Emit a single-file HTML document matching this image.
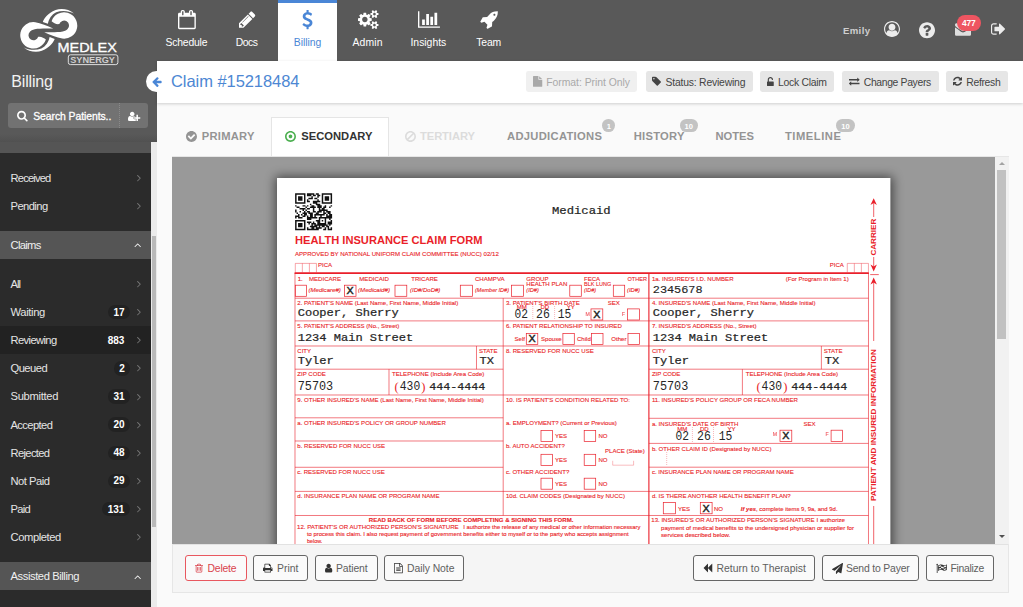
<!DOCTYPE html>
<html lang="en"><head><meta charset="utf-8"><title>Claim #15218484 - Billing</title>
<style>
html,body{margin:0;padding:0}
body{width:1023px;height:607px;overflow:hidden;background:#fafafa;position:relative;font-family:"Liberation Sans",sans-serif}
#app{position:absolute;left:0;top:0;width:1023px;height:607px;overflow:hidden}
#app div,#app span.t,#app svg.i,#app svg.a{position:absolute}
span.t{white-space:nowrap;display:block}
svg{display:block;overflow:visible}
</style></head>
<body><div id="app">
<div style="left:0px;top:0px;width:1023px;height:60.7px;background:#595959"></div>
<div style="left:0px;top:60px;width:157px;height:82px;background:#595959"></div>
<div style="left:0px;top:142px;width:151px;height:465px;background:#2b2b2b"></div>
<div style="left:0px;top:142px;width:151px;height:11px;background:#555"></div>
<div style="left:0px;top:134px;width:157px;height:8px;background:linear-gradient(to bottom,rgba(0,0,0,0),rgba(0,0,0,.09))"></div>
<div style="left:151px;top:142px;width:6px;height:465px;background:#ebebeb"></div>
<div style="left:151.5px;top:236px;width:4.5px;height:291px;background:#b9b9b9"></div>
<div style="left:277.5px;top:0px;width:59.9px;height:61px;background:#fff"></div>
<div style="left:277.5px;top:0px;width:59.9px;height:2.6px;background:#4a86d6"></div>
<svg class="i" style="left:177.79px;top:9.50px;" width="17.83" height="19.20" viewBox="0 0 1664 1792"><path fill="#fff" d="M128 1664V640H1536V1664ZM512 448C512 466 498 480 480 480H416C398 480 384 466 384 448V160C384 142 398 128 416 128H480C498 128 512 142 512 160V448ZM1280 448C1280 466 1266 480 1248 480H1184C1166 480 1152 466 1152 448V160C1152 142 1166 128 1184 128H1248C1266 128 1280 142 1280 160V448ZM1664 384C1664 314 1606 256 1536 256H1408V160C1408 72 1336 0 1248 0H1184C1096 0 1024 72 1024 160V256H640V160C640 72 568 0 480 0H416C328 0 256 72 256 160V256H128C58 256 0 314 0 384V1664C0 1734 58 1792 128 1792H1536C1606 1792 1664 1734 1664 1664Z"/></svg>
<span class="t" style="left:165.50px;top:38.00px;font-size:10.4px;line-height:10.4px;color:#fff;font-weight:400;letter-spacing:-0.196px;">Schedule</span>
<svg class="i" style="left:238.92px;top:9.50px;" width="16.46" height="19.20" viewBox="0 0 1536 1792"><path fill="#fff" d="M363 1536H256V1408H128V1301L219 1210L454 1445ZM886 608C886 614 884 620 879 625L337 1167C332 1172 326 1174 320 1174C307 1174 298 1165 298 1152C298 1146 300 1140 305 1135L847 593C852 588 858 586 864 586C877 586 886 595 886 608ZM832 416 0 1248V1664H416L1248 832ZM1515 512C1515 478 1501 445 1478 421L1243 187C1219 163 1186 149 1152 149C1118 149 1085 163 1062 187L896 352L1312 768L1478 602C1501 579 1515 546 1515 512Z"/></svg>
<span class="t" style="left:235.75px;top:38.00px;font-size:10.4px;line-height:10.4px;color:#fff;font-weight:400;letter-spacing:-0.482px;">Docs</span>
<svg class="i" style="left:302.11px;top:9.50px;" width="10.97" height="19.20" viewBox="0 0 1024 1792"><path fill="#4a86d6" d="M978 1185C978 944 770 863 586 792C444 737 322 690 322 584C322 493 410 430 537 430C687 430 808 537 809 538C817 544 826 547 836 545C846 544 854 538 859 529L940 383C947 371 945 356 935 345C931 341 823 231 620 208V32C620 14 606 0 588 0H453C436 0 421 14 421 32V212C212 252 68 404 68 588C68 839 292 929 472 1000C607 1054 725 1101 725 1197C725 1310 619 1362 521 1362C344 1362 204 1228 202 1227C196 1220 187 1217 178 1218C169 1219 160 1223 155 1230L52 1365C43 1377 44 1394 54 1406C59 1412 187 1552 421 1585V1760C421 1778 436 1792 453 1792H588C606 1792 620 1778 620 1760V1585C832 1550 978 1389 978 1185Z"/></svg>
<span class="t" style="left:293.75px;top:38.00px;font-size:10.4px;line-height:10.4px;color:#4a86d6;font-weight:400;letter-spacing:-0.041px;">Billing</span>
<svg class="i" style="left:357.76px;top:9.50px;" width="20.57" height="19.20" viewBox="0 0 1920 1792"><path fill="#fff" d="M896 896C896 1037 781 1152 640 1152C499 1152 384 1037 384 896C384 755 499 640 640 640C781 640 896 755 896 896ZM1664 1408C1664 1478 1607 1536 1536 1536C1466 1536 1408 1479 1408 1408C1408 1338 1466 1280 1536 1280C1606 1280 1664 1338 1664 1408ZM1664 384C1664 454 1607 512 1536 512C1466 512 1408 455 1408 384C1408 314 1466 256 1536 256C1606 256 1664 314 1664 384ZM1280 805C1280 791 1270 778 1256 775L1104 752C1095 724 1083 697 1070 670C1098 631 1128 595 1157 556C1161 550 1164 544 1164 537C1164 509 1046 401 1020 377C1014 372 1007 369 999 369C992 369 985 371 979 376L861 465C837 453 812 442 786 434L763 281C761 267 747 256 733 256H547C533 256 521 266 517 280C504 329 499 384 494 434C467 443 442 453 417 466L302 376C296 372 289 369 281 369C252 369 140 490 120 517C115 523 113 530 113 537C113 544 116 551 120 557C152 595 182 632 210 672C197 697 186 722 178 748L23 772C10 774 0 789 0 802V987C0 1001 10 1014 24 1016L176 1040C185 1068 197 1095 211 1122C182 1161 152 1198 123 1236C119 1242 116 1248 116 1255C116 1284 234 1391 260 1415C266 1420 273 1423 281 1423C288 1423 296 1421 301 1416L419 1327C443 1339 468 1350 494 1358L517 1511C519 1525 533 1536 547 1536H733C747 1536 759 1526 763 1512C776 1463 781 1408 786 1357C813 1349 838 1339 863 1326L978 1416C984 1420 991 1423 999 1423C1028 1423 1140 1301 1160 1274C1165 1269 1167 1262 1167 1255C1167 1247 1164 1241 1160 1235C1128 1197 1098 1160 1070 1120C1083 1095 1094 1070 1102 1044L1257 1020C1270 1018 1280 1003 1280 990ZM1920 1338C1920 1323 1791 1309 1771 1307C1763 1289 1753 1271 1741 1255C1750 1235 1792 1135 1792 1117C1792 1115 1791 1112 1788 1110C1776 1103 1669 1040 1664 1040L1658 1042C1624 1076 1594 1115 1566 1154C1556 1153 1546 1152 1536 1152C1526 1152 1516 1153 1506 1154C1496 1139 1421 1040 1408 1040C1403 1040 1296 1104 1284 1110C1281 1112 1280 1115 1280 1117C1280 1134 1322 1235 1331 1255C1319 1271 1309 1289 1301 1307C1281 1309 1152 1323 1152 1338V1478C1152 1493 1281 1507 1301 1509C1309 1528 1319 1545 1331 1561C1322 1581 1280 1682 1280 1699C1280 1701 1281 1704 1284 1706C1296 1713 1403 1777 1408 1777C1421 1777 1496 1677 1506 1662C1516 1663 1526 1664 1536 1664C1546 1664 1556 1663 1566 1662C1576 1677 1651 1777 1664 1777C1669 1777 1776 1713 1788 1706C1791 1704 1792 1702 1792 1699C1792 1681 1750 1581 1741 1561C1753 1545 1763 1528 1771 1509C1791 1507 1920 1493 1920 1478ZM1920 314C1920 299 1791 285 1771 283C1763 265 1753 247 1741 231C1750 211 1792 111 1792 93C1792 91 1791 88 1788 86C1776 79 1669 16 1664 16L1658 18C1624 52 1594 91 1566 130C1556 129 1546 128 1536 128C1526 128 1516 129 1506 130C1496 115 1421 16 1408 16C1403 16 1296 80 1284 86C1281 88 1280 91 1280 93C1280 110 1322 211 1331 231C1319 247 1309 265 1301 283C1281 285 1152 299 1152 314V454C1152 469 1281 483 1301 485C1309 504 1319 521 1331 537C1322 557 1280 658 1280 675C1280 677 1281 680 1284 682C1296 689 1403 753 1408 753C1421 753 1496 653 1506 638C1516 639 1526 640 1536 640C1546 640 1556 639 1566 638C1576 653 1651 753 1664 753C1669 753 1776 689 1788 682C1791 680 1792 678 1792 675C1792 657 1750 557 1741 537C1753 521 1763 504 1771 485C1791 483 1920 469 1920 454Z"/></svg>
<span class="t" style="left:352.50px;top:38.00px;font-size:10.4px;line-height:10.4px;color:#fff;font-weight:400;letter-spacing:0.130px;">Admin</span>
<svg class="i" style="left:417.53px;top:9.50px;" width="21.94" height="19.20" viewBox="0 0 2048 1792"><path fill="#fff" d="M640 896H384V1408H640ZM1024 384H768V1408H1024ZM2048 1536H128V128H0V1664H2048ZM1408 640H1152V1408H1408ZM1792 256H1536V1408H1792Z"/></svg>
<span class="t" style="left:410.50px;top:38.00px;font-size:10.4px;line-height:10.4px;color:#fff;font-weight:400;letter-spacing:-0.013px;">Insights</span>
<svg class="i" style="left:480.04px;top:9.50px;" width="17.83" height="19.20" viewBox="0 0 1664 1792"><path fill="#fff" d="M1440 448C1440 501 1397 544 1344 544C1291 544 1248 501 1248 448C1248 395 1291 352 1344 352C1397 352 1440 395 1440 448ZM1664 160C1664 142 1648 128 1630 128C1282 128 1091 208 841 457C784 515 725 581 665 652L286 672C276 673 266 679 260 688L36 1072C29 1084 31 1100 41 1111L105 1175C111 1181 120 1184 128 1184C131 1184 134 1184 137 1183L413 1098L694 1379L609 1655C606 1666 609 1678 617 1687L681 1751C688 1757 696 1760 704 1760C710 1760 715 1759 720 1756L1104 1532C1113 1526 1119 1516 1120 1506L1140 1127C1211 1067 1277 1008 1335 951C1572 713 1664 492 1664 160Z"/></svg>
<span class="t" style="left:476.25px;top:38.00px;font-size:10.4px;line-height:10.4px;color:#fff;font-weight:400;letter-spacing:-0.144px;">Team</span>
<span class="t" style="left:843.00px;top:26.00px;font-size:9.6px;line-height:9.6px;color:#cfcfcf;font-weight:700;letter-spacing:0.347px;">Emily</span>
<svg class="i" style="left:883.60px;top:21.40px;" width="16.00" height="16.00" viewBox="0 0 1792 1792"><path fill="#ececec" d="M896 0C401 0 0 401 0 896C0 1389 400 1792 896 1792C1393 1792 1792 1388 1792 896C1792 401 1391 0 896 0ZM1515 1351C1479 1172 1392 1024 1209 1024C1128 1103 1018 1152 896 1152C774 1152 664 1103 583 1024C400 1024 313 1172 277 1351C184 1223 128 1066 128 896C128 473 473 128 896 128C1319 128 1664 473 1664 896C1664 1066 1608 1223 1515 1351ZM1280 704C1280 916 1108 1088 896 1088C684 1088 512 916 512 704C512 492 684 320 896 320C1108 320 1280 492 1280 704Z"/></svg>
<svg class="i" style="left:919.19px;top:20.65px;" width="16.03" height="18.70" viewBox="0 0 1536 1792"><path fill="#ececec" d="M896 1376C896 1394 882 1408 864 1408H672C654 1408 640 1394 640 1376V1184C640 1166 654 1152 672 1152H864C882 1152 896 1166 896 1184V1376ZM1152 704C1152 856 1048 914 972 957C925 984 896 1033 896 1056C896 1074 882 1088 864 1088H672C654 1088 640 1074 640 1056V1020C640 923 737 840 808 808C869 780 896 754 896 702C896 658 837 617 773 617C737 617 704 629 687 641C668 655 648 673 601 733C595 741 585 745 576 745C569 745 562 743 557 739L425 639C412 629 408 611 417 597C503 454 625 384 788 384C960 384 1152 521 1152 704ZM1536 896C1536 472 1192 128 768 128C344 128 0 472 0 896C0 1320 344 1664 768 1664C1192 1664 1536 1320 1536 896Z"/></svg>
<svg class="i" style="left:954.80px;top:21.30px;" width="16.00" height="16.00" viewBox="0 0 1792 1792"><path fill="#dedede" d="M1792 710C1762 743 1728 772 1692 797C1525 910 1357 1024 1194 1142C1110 1204 1006 1280 897 1280H896H895C786 1280 682 1204 598 1142C435 1023 267 910 101 797C64 772 30 743 0 710V1504C0 1592 72 1664 160 1664H1632C1720 1664 1792 1592 1792 1504ZM1792 416C1792 328 1719 256 1632 256H160C53 256 0 340 0 438C0 529 101 642 172 690C327 798 484 906 639 1015C704 1060 814 1152 895 1152H896H897C978 1152 1088 1060 1153 1015C1308 906 1465 798 1621 690C1709 629 1792 528 1792 416Z"/></svg>
<div style="left:956.9px;top:15.4px;width:23.9px;height:15.4px;border-radius:8px;background:#ee5561"></div>
<span class="t" style="left:962.00px;top:19.00px;font-size:8.4px;line-height:8.4px;color:#fff;font-weight:700;letter-spacing:-0.108px;">477</span>
<svg class="i" style="left:990.70px;top:21.30px;" width="14.86" height="16.00" viewBox="0 0 1664 1792"><path fill="#ececec" d="M640 1440C640 1403 601 1408 576 1408H288C200 1408 128 1336 128 1248V544C128 456 200 384 288 384H608C653 384 640 316 640 288C640 271 625 256 608 256H288C129 256 0 385 0 544V1248C0 1407 129 1536 288 1536H608C653 1536 640 1468 640 1440ZM1568 896C1568 879 1561 863 1549 851L1005 307C993 295 977 288 960 288C925 288 896 317 896 352V640H448C413 640 384 669 384 704V1088C384 1123 413 1152 448 1152H896V1440C896 1475 925 1504 960 1504C977 1504 993 1497 1005 1485L1549 941C1561 929 1568 913 1568 896Z"/></svg>
<span class="t" style="left:11.25px;top:74.00px;font-size:16px;line-height:16px;color:#f2f2f2;font-weight:400;letter-spacing:-0.157px;">Billing</span>
<div style="left:8px;top:103px;width:140px;height:24.5px;border-radius:3px;background:#727272"></div>
<div style="left:118.6px;top:103px;width:0;height:24.5px;border-left:1px dotted #8a8a8a"></div>
<svg class="i" style="left:17.00px;top:110.43px;" width="10.70" height="11.52" viewBox="0 0 1664 1792"><path fill="#fff" d="M1152 832C1152 1079 951 1280 704 1280C457 1280 256 1079 256 832C256 585 457 384 704 384C951 384 1152 585 1152 832ZM1664 1664C1664 1630 1650 1597 1627 1574L1284 1231C1365 1114 1408 974 1408 832C1408 443 1093 128 704 128C315 128 0 443 0 832C0 1221 315 1536 704 1536C846 1536 986 1493 1103 1412L1446 1754C1469 1778 1502 1792 1536 1792C1606 1792 1664 1734 1664 1664Z"/></svg>
<span class="t" style="left:33.25px;top:112.00px;font-size:10.4px;line-height:10.4px;color:#fff;font-weight:400;letter-spacing:-0.066px;-webkit-text-stroke:.3px #fff;">Search Patients..</span>
<svg class="i" style="left:128.25px;top:110.94px;" width="12.25" height="10.72" viewBox="0 0 2048 1792"><path fill="#fff" d="M704 896C916 896 1088 724 1088 512C1088 300 916 128 704 128C492 128 320 300 320 512C320 724 492 896 704 896ZM1664 1024V672C1664 655 1649 640 1632 640H1440C1423 640 1408 655 1408 672V1024H1056C1039 1024 1024 1039 1024 1056V1248C1024 1265 1039 1280 1056 1280H1408V1632C1408 1649 1423 1664 1440 1664H1632C1649 1664 1664 1649 1664 1632V1280H2016C2033 1280 2048 1265 2048 1248V1056C2048 1039 2033 1024 2016 1024ZM928 1248V1056C928 986 986 928 1056 928H1279C1222 864 1147 832 1062 832C1046 832 1035 839 1023 849C925 924 830 971 704 971C578 971 483 924 385 849C373 839 362 832 346 832C53 832 0 1179 0 1405C0 1568 107 1664 267 1664H1141C1201 1664 1263 1650 1312 1614V1376H1056C986 1376 928 1318 928 1248Z"/></svg>
<div style="left:0px;top:231px;width:151px;height:27.7px;background:#555"></div>
<div style="left:0px;top:562px;width:151px;height:27.7px;background:#555"></div>
<div style="left:0px;top:326px;width:151px;height:28px;background:#222"></div>
<span class="t" style="left:10.50px;top:173.00px;font-size:11.2px;line-height:11.2px;color:#e4e4e4;font-weight:400;letter-spacing:-0.828px;">Received</span>
<svg class="i" style="left:136.85px;top:172.04px;" width="4.11" height="11.50" viewBox="0 0 640 1792"><path fill="#777" d="M595 960C595 952 591 943 585 937L119 471C113 465 104 461 96 461C88 461 79 465 73 471L23 521C17 527 13 536 13 544C13 552 17 561 23 567L416 960L23 1353C17 1359 13 1368 13 1376C13 1385 17 1393 23 1399L73 1449C79 1455 88 1459 96 1459C104 1459 113 1455 119 1449L585 983C591 977 595 968 595 960Z"/></svg>
<span class="t" style="left:10.50px;top:201.00px;font-size:11.2px;line-height:11.2px;color:#e4e4e4;font-weight:400;letter-spacing:-0.567px;">Pending</span>
<svg class="i" style="left:136.85px;top:200.14px;" width="4.11" height="11.50" viewBox="0 0 640 1792"><path fill="#777" d="M595 960C595 952 591 943 585 937L119 471C113 465 104 461 96 461C88 461 79 465 73 471L23 521C17 527 13 536 13 544C13 552 17 561 23 567L416 960L23 1353C17 1359 13 1368 13 1376C13 1385 17 1393 23 1399L73 1449C79 1455 88 1459 96 1459C104 1459 113 1455 119 1449L585 983C591 977 595 968 595 960Z"/></svg>
<span class="t" style="left:10.50px;top:279.00px;font-size:11.2px;line-height:11.2px;color:#e4e4e4;font-weight:400;letter-spacing:-0.974px;">All</span>
<svg class="i" style="left:136.85px;top:278.04px;" width="4.11" height="11.50" viewBox="0 0 640 1792"><path fill="#777" d="M595 960C595 952 591 943 585 937L119 471C113 465 104 461 96 461C88 461 79 465 73 471L23 521C17 527 13 536 13 544C13 552 17 561 23 567L416 960L23 1353C17 1359 13 1368 13 1376C13 1385 17 1393 23 1399L73 1449C79 1455 88 1459 96 1459C104 1459 113 1455 119 1449L585 983C591 977 595 968 595 960Z"/></svg>
<span class="t" style="left:10.50px;top:307.00px;font-size:11.2px;line-height:11.2px;color:#e4e4e4;font-weight:400;letter-spacing:-0.355px;">Waiting</span>
<svg class="i" style="left:136.85px;top:306.14px;" width="4.11" height="11.50" viewBox="0 0 640 1792"><path fill="#777" d="M595 960C595 952 591 943 585 937L119 471C113 465 104 461 96 461C88 461 79 465 73 471L23 521C17 527 13 536 13 544C13 552 17 561 23 567L416 960L23 1353C17 1359 13 1368 13 1376C13 1385 17 1393 23 1399L73 1449C79 1455 88 1459 96 1459C104 1459 113 1455 119 1449L585 983C591 977 595 968 595 960Z"/></svg>
<div style="left:108px;top:304.90000000000003px;width:22px;height:14.4px;border-radius:7.2px;background:#222"></div>
<span class="t" style="left:113.44px;top:308.00px;font-size:10px;line-height:10px;color:#fff;font-weight:700;letter-spacing:-0.000px;">17</span>
<span class="t" style="left:10.50px;top:335.00px;font-size:11.2px;line-height:11.2px;color:#e4e4e4;font-weight:400;letter-spacing:-0.621px;">Reviewing</span>
<svg class="i" style="left:136.85px;top:334.24px;" width="4.11" height="11.50" viewBox="0 0 640 1792"><path fill="#777" d="M595 960C595 952 591 943 585 937L119 471C113 465 104 461 96 461C88 461 79 465 73 471L23 521C17 527 13 536 13 544C13 552 17 561 23 567L416 960L23 1353C17 1359 13 1368 13 1376C13 1385 17 1393 23 1399L73 1449C79 1455 88 1459 96 1459C104 1459 113 1455 119 1449L585 983C591 977 595 968 595 960Z"/></svg>
<div style="left:102px;top:333.0px;width:28px;height:14.4px;border-radius:7.2px;background:#222"></div>
<span class="t" style="left:107.66px;top:336.00px;font-size:10px;line-height:10px;color:#fff;font-weight:700;letter-spacing:0.000px;">883</span>
<span class="t" style="left:10.50px;top:363.00px;font-size:11.2px;line-height:11.2px;color:#e4e4e4;font-weight:400;letter-spacing:-0.531px;">Queued</span>
<svg class="i" style="left:136.85px;top:362.44px;" width="4.11" height="11.50" viewBox="0 0 640 1792"><path fill="#777" d="M595 960C595 952 591 943 585 937L119 471C113 465 104 461 96 461C88 461 79 465 73 471L23 521C17 527 13 536 13 544C13 552 17 561 23 567L416 960L23 1353C17 1359 13 1368 13 1376C13 1385 17 1393 23 1399L73 1449C79 1455 88 1459 96 1459C104 1459 113 1455 119 1449L585 983C591 977 595 968 595 960Z"/></svg>
<div style="left:114px;top:361.2px;width:16px;height:14.4px;border-radius:7.2px;background:#222"></div>
<span class="t" style="left:119.22px;top:364.00px;font-size:10px;line-height:10px;color:#fff;font-weight:700;">2</span>
<span class="t" style="left:10.50px;top:391.00px;font-size:11.2px;line-height:11.2px;color:#e4e4e4;font-weight:400;letter-spacing:-0.304px;">Submitted</span>
<svg class="i" style="left:136.85px;top:390.54px;" width="4.11" height="11.50" viewBox="0 0 640 1792"><path fill="#777" d="M595 960C595 952 591 943 585 937L119 471C113 465 104 461 96 461C88 461 79 465 73 471L23 521C17 527 13 536 13 544C13 552 17 561 23 567L416 960L23 1353C17 1359 13 1368 13 1376C13 1385 17 1393 23 1399L73 1449C79 1455 88 1459 96 1459C104 1459 113 1455 119 1449L585 983C591 977 595 968 595 960Z"/></svg>
<div style="left:108px;top:389.3px;width:22px;height:14.4px;border-radius:7.2px;background:#222"></div>
<span class="t" style="left:113.44px;top:392.00px;font-size:10px;line-height:10px;color:#fff;font-weight:700;letter-spacing:-0.000px;">31</span>
<span class="t" style="left:10.50px;top:420.00px;font-size:11.2px;line-height:11.2px;color:#e4e4e4;font-weight:400;letter-spacing:-0.600px;">Accepted</span>
<svg class="i" style="left:136.85px;top:418.64px;" width="4.11" height="11.50" viewBox="0 0 640 1792"><path fill="#777" d="M595 960C595 952 591 943 585 937L119 471C113 465 104 461 96 461C88 461 79 465 73 471L23 521C17 527 13 536 13 544C13 552 17 561 23 567L416 960L23 1353C17 1359 13 1368 13 1376C13 1385 17 1393 23 1399L73 1449C79 1455 88 1459 96 1459C104 1459 113 1455 119 1449L585 983C591 977 595 968 595 960Z"/></svg>
<div style="left:108px;top:417.40000000000003px;width:22px;height:14.4px;border-radius:7.2px;background:#222"></div>
<span class="t" style="left:113.44px;top:420.00px;font-size:10px;line-height:10px;color:#fff;font-weight:700;letter-spacing:-0.000px;">20</span>
<span class="t" style="left:10.50px;top:448.00px;font-size:11.2px;line-height:11.2px;color:#e4e4e4;font-weight:400;letter-spacing:-0.658px;">Rejected</span>
<svg class="i" style="left:136.85px;top:446.74px;" width="4.11" height="11.50" viewBox="0 0 640 1792"><path fill="#777" d="M595 960C595 952 591 943 585 937L119 471C113 465 104 461 96 461C88 461 79 465 73 471L23 521C17 527 13 536 13 544C13 552 17 561 23 567L416 960L23 1353C17 1359 13 1368 13 1376C13 1385 17 1393 23 1399L73 1449C79 1455 88 1459 96 1459C104 1459 113 1455 119 1449L585 983C591 977 595 968 595 960Z"/></svg>
<div style="left:108px;top:445.5px;width:22px;height:14.4px;border-radius:7.2px;background:#222"></div>
<span class="t" style="left:113.44px;top:448.00px;font-size:10px;line-height:10px;color:#fff;font-weight:700;letter-spacing:-0.000px;">48</span>
<span class="t" style="left:10.50px;top:476.00px;font-size:11.2px;line-height:11.2px;color:#e4e4e4;font-weight:400;letter-spacing:-0.480px;">Not Paid</span>
<svg class="i" style="left:136.85px;top:474.84px;" width="4.11" height="11.50" viewBox="0 0 640 1792"><path fill="#777" d="M595 960C595 952 591 943 585 937L119 471C113 465 104 461 96 461C88 461 79 465 73 471L23 521C17 527 13 536 13 544C13 552 17 561 23 567L416 960L23 1353C17 1359 13 1368 13 1376C13 1385 17 1393 23 1399L73 1449C79 1455 88 1459 96 1459C104 1459 113 1455 119 1449L585 983C591 977 595 968 595 960Z"/></svg>
<div style="left:108px;top:473.6px;width:22px;height:14.4px;border-radius:7.2px;background:#222"></div>
<span class="t" style="left:113.44px;top:476.00px;font-size:10px;line-height:10px;color:#fff;font-weight:700;letter-spacing:-0.000px;">29</span>
<span class="t" style="left:10.50px;top:504.00px;font-size:11.2px;line-height:11.2px;color:#e4e4e4;font-weight:400;letter-spacing:-0.706px;">Paid</span>
<svg class="i" style="left:136.85px;top:503.04px;" width="4.11" height="11.50" viewBox="0 0 640 1792"><path fill="#777" d="M595 960C595 952 591 943 585 937L119 471C113 465 104 461 96 461C88 461 79 465 73 471L23 521C17 527 13 536 13 544C13 552 17 561 23 567L416 960L23 1353C17 1359 13 1368 13 1376C13 1385 17 1393 23 1399L73 1449C79 1455 88 1459 96 1459C104 1459 113 1455 119 1449L585 983C591 977 595 968 595 960Z"/></svg>
<div style="left:102px;top:501.8px;width:28px;height:14.4px;border-radius:7.2px;background:#222"></div>
<span class="t" style="left:107.66px;top:505.00px;font-size:10px;line-height:10px;color:#fff;font-weight:700;letter-spacing:0.000px;">131</span>
<span class="t" style="left:10.50px;top:532.00px;font-size:11.2px;line-height:11.2px;color:#e4e4e4;font-weight:400;letter-spacing:-0.408px;">Completed</span>
<svg class="i" style="left:136.85px;top:531.14px;" width="4.11" height="11.50" viewBox="0 0 640 1792"><path fill="#777" d="M595 960C595 952 591 943 585 937L119 471C113 465 104 461 96 461C88 461 79 465 73 471L23 521C17 527 13 536 13 544C13 552 17 561 23 567L416 960L23 1353C17 1359 13 1368 13 1376C13 1385 17 1393 23 1399L73 1449C79 1455 88 1459 96 1459C104 1459 113 1455 119 1449L585 983C591 977 595 968 595 960Z"/></svg>
<span class="t" style="left:10.50px;top:240.00px;font-size:11.2px;line-height:11.2px;color:#f0f0f0;font-weight:400;letter-spacing:-0.665px;">Claims</span>
<svg class="i" style="left:133.80px;top:239.04px;" width="7.39" height="11.50" viewBox="0 0 1152 1792"><path fill="#fff" d="M1075 1184C1075 1176 1071 1167 1065 1161L599 695C593 689 584 685 576 685C568 685 559 689 553 695L87 1161C81 1167 77 1176 77 1184C77 1192 81 1201 87 1207L137 1257C143 1263 152 1267 160 1267C168 1267 177 1263 183 1257L576 864L969 1257C975 1263 984 1267 992 1267C1001 1267 1009 1263 1015 1257L1065 1207C1071 1201 1075 1192 1075 1184Z"/></svg>
<span class="t" style="left:10.50px;top:571.00px;font-size:11.2px;line-height:11.2px;color:#f0f0f0;font-weight:400;letter-spacing:-0.415px;">Assisted Billing</span>
<svg class="i" style="left:133.80px;top:570.54px;" width="7.39" height="11.50" viewBox="0 0 1152 1792"><path fill="#fff" d="M1075 1184C1075 1176 1071 1167 1065 1161L599 695C593 689 584 685 576 685C568 685 559 689 553 695L87 1161C81 1167 77 1176 77 1184C77 1192 81 1201 87 1207L137 1257C143 1263 152 1267 160 1267C168 1267 177 1263 183 1257L576 864L969 1257C975 1263 984 1267 992 1267C1001 1267 1009 1263 1015 1257L1065 1207C1071 1201 1075 1192 1075 1184Z"/></svg>
<div style="left:157px;top:60.7px;width:866px;height:42px;background:#fff;box-shadow:0 1px 3px rgba(0,0,0,.18)"></div>
<div style="left:146px;top:71px;width:21px;height:21px;border-radius:50%;background:#fff"></div>
<svg class="i" style="left:151.60px;top:75.57px;" width="9.65" height="11.26" viewBox="0 0 1536 1792"><path fill="#4a86d6" d="M1536 896C1536 828 1491 768 1419 768H715L1008 475C1032 451 1046 418 1046 384C1046 350 1032 317 1008 293L933 219C909 195 877 181 843 181C809 181 776 195 752 219L101 869C78 893 64 926 64 960C64 994 78 1027 101 1050L752 1702C776 1725 809 1739 843 1739C877 1739 910 1725 933 1702L1008 1626C1032 1603 1046 1570 1046 1536C1046 1502 1032 1469 1008 1446L715 1152H1419C1491 1152 1536 1092 1536 1024Z"/></svg>
<span class="t" style="left:171.00px;top:73.00px;font-size:16.5px;line-height:16.5px;color:#4d87d3;font-weight:400;letter-spacing:-0.060px;">Claim #15218484</span>
<div style="left:525.5px;top:71px;width:111.5px;height:21px;border-radius:2.4px;background:#f0f0f0"></div>
<svg class="i" style="left:532.50px;top:76.30px;" width="9.25" height="10.79" viewBox="0 0 1536 1792"><path fill="#a9a9a9" d="M1024 512H1496C1487 498 1478 486 1468 476L1060 68C1050 58 1038 49 1024 40ZM896 544V0H96C43 0 0 43 0 96V1696C0 1749 43 1792 96 1792H1440C1493 1792 1536 1749 1536 1696V640H992C939 640 896 597 896 544Z"/></svg>
<span class="t" style="left:546.25px;top:78.00px;font-size:10.4px;line-height:10.4px;color:#a9a9a9;font-weight:400;letter-spacing:-0.037px;">Format: Print Only</span>
<div style="left:645.5px;top:71px;width:107.0px;height:21px;border-radius:2.4px;background:#e6e6e6"></div>
<svg class="i" style="left:651.75px;top:76.44px;" width="9.12" height="10.65" viewBox="0 0 1536 1792"><path fill="#444" d="M448 448C448 519 391 576 320 576C249 576 192 519 192 448C192 377 249 320 320 320C391 320 448 377 448 448ZM1515 1024C1515 990 1501 957 1478 933L763 219C712 168 615 128 544 128H128C58 128 0 186 0 256V672C0 743 40 840 91 890L806 1606C829 1629 862 1643 896 1643C930 1643 963 1629 987 1606L1478 1114C1501 1091 1515 1058 1515 1024Z"/></svg>
<span class="t" style="left:665.50px;top:78.00px;font-size:10.4px;line-height:10.4px;color:#444;font-weight:400;letter-spacing:-0.203px;">Status: Reviewing</span>
<div style="left:760px;top:71px;width:74px;height:21px;border-radius:2.4px;background:#e6e6e6"></div>
<svg class="i" style="left:767.00px;top:77.20px;" width="6.75" height="10.50" viewBox="0 0 1152 1792"><path fill="#444" d="M1056 768H320V448C320 307 435 192 576 192C717 192 832 307 832 448C832 483 861 512 896 512H960C995 512 1024 483 1024 448C1024 201 823 0 576 0C329 0 128 201 128 448V768H96C43 768 0 811 0 864V1440C0 1493 43 1536 96 1536H1056C1109 1536 1152 1493 1152 1440V864C1152 811 1109 768 1056 768Z"/></svg>
<span class="t" style="left:778.00px;top:78.00px;font-size:10.4px;line-height:10.4px;color:#444;font-weight:400;letter-spacing:-0.271px;">Lock Claim</span>
<div style="left:842px;top:71px;width:96.5px;height:21px;border-radius:2.4px;background:#e6e6e6"></div>
<svg class="i" style="left:849.00px;top:76.08px;" width="10.50" height="10.50" viewBox="0 0 1792 1792"><path fill="#444" d="M1792 1184C1792 1166 1777 1152 1760 1152H384V960C384 942 369 928 352 928C344 928 335 931 329 937L9 1257C3 1263 0 1271 0 1280C0 1288 3 1296 9 1302L328 1622C335 1628 343 1632 352 1632C370 1632 384 1617 384 1600V1408H1760C1777 1408 1792 1393 1792 1376ZM1792 640C1792 632 1789 623 1783 617L1464 298C1457 292 1449 288 1440 288C1422 288 1408 302 1408 320V512H32C15 512 0 527 0 544V736C0 753 15 768 32 768H1408V960C1408 977 1423 992 1440 992C1448 992 1457 989 1463 983L1783 663C1789 657 1792 648 1792 640Z"/></svg>
<span class="t" style="left:863.75px;top:78.00px;font-size:10.4px;line-height:10.4px;color:#444;font-weight:400;letter-spacing:-0.349px;">Change Payers</span>
<div style="left:945.5px;top:71px;width:62.5px;height:21px;border-radius:2.4px;background:#e6e6e6"></div>
<svg class="i" style="left:952.50px;top:76.45px;" width="9.00" height="10.50" viewBox="0 0 1536 1792"><path fill="#444" d="M1511 1056C1511 1039 1497 1024 1479 1024H1287C1272 1024 1262 1033 1257 1047C1240 1087 1228 1125 1204 1164C1111 1316 946 1408 768 1408C639 1408 514 1358 420 1270L557 1133C569 1121 576 1105 576 1088C576 1053 547 1024 512 1024H64C29 1024 0 1053 0 1088V1536C0 1571 29 1600 64 1600C81 1600 97 1593 109 1581L238 1452C380 1587 569 1664 764 1664C1133 1664 1425 1417 1510 1063C1511 1061 1511 1058 1511 1056ZM1536 256C1536 221 1507 192 1472 192C1455 192 1439 199 1427 211L1297 340C1155 206 964 128 768 128C399 128 104 374 18 729C18 731 18 734 18 736C18 753 32 768 50 768H249C264 768 274 759 279 745C296 705 308 667 332 628C425 476 590 384 768 384C897 384 1022 433 1117 521L979 659C967 671 960 687 960 704C960 739 989 768 1024 768H1472C1507 768 1536 739 1536 704Z"/></svg>
<span class="t" style="left:966.25px;top:78.00px;font-size:10.4px;line-height:10.4px;color:#444;font-weight:400;letter-spacing:-0.319px;">Refresh</span>
<div style="left:271px;top:117.3px;width:117.5px;height:40px;background:#fff;border:1px solid #e5e5e5;border-bottom:0;box-sizing:border-box"></div>
<svg class="i" style="left:185.51px;top:130.00px;" width="10.97" height="12.80" viewBox="0 0 1536 1792"><path fill="#949494" d="M1284 734C1284 751 1278 767 1266 779L723 1322C711 1334 694 1341 677 1341C661 1341 644 1334 632 1322L270 960C258 948 252 932 252 915C252 898 258 881 270 869L361 779C373 767 389 760 406 760C423 760 439 767 451 779L677 1005L1085 598C1097 586 1113 579 1130 579C1147 579 1163 586 1175 598L1266 688C1278 700 1284 717 1284 734ZM1536 896C1536 472 1192 128 768 128C344 128 0 472 0 896C0 1320 344 1664 768 1664C1192 1664 1536 1320 1536 896Z"/></svg>
<span class="t" style="left:201.75px;top:131.00px;font-size:11.2px;line-height:11.2px;color:#949494;font-weight:700;letter-spacing:0.253px;">PRIMARY</span>
<svg class="i" style="left:284.91px;top:130.00px;" width="10.97" height="12.80" viewBox="0 0 1536 1792"><path fill="#4caf50" d="M1024 896C1024 755 909 640 768 640C627 640 512 755 512 896C512 1037 627 1152 768 1152C909 1152 1024 1037 1024 896ZM768 352C1068 352 1312 596 1312 896C1312 1196 1068 1440 768 1440C468 1440 224 1196 224 896C224 596 468 352 768 352ZM1536 896C1536 472 1192 128 768 128C344 128 0 472 0 896C0 1320 344 1664 768 1664C1192 1664 1536 1320 1536 896Z"/></svg>
<span class="t" style="left:301.25px;top:131.00px;font-size:11.2px;line-height:11.2px;color:#333;font-weight:700;letter-spacing:0.012px;">SECONDARY</span>
<svg class="i" style="left:404.51px;top:130.02px;" width="10.97" height="12.80" viewBox="0 0 1536 1792"><path fill="#dcdcdc" d="M1312 893C1312 1195 1068 1440 768 1440C659 1440 557 1407 471 1351L1225 598C1280 683 1312 784 1312 893ZM313 1192C257 1106 224 1004 224 893C224 592 468 347 768 347C879 347 982 380 1068 438ZM1536 893C1536 468 1192 123 768 123C344 123 0 468 0 893C0 1319 344 1664 768 1664C1192 1664 1536 1319 1536 893Z"/></svg>
<span class="t" style="left:420.00px;top:131.00px;font-size:11.2px;line-height:11.2px;color:#dcdcdc;font-weight:700;letter-spacing:-0.084px;">TERTIARY</span>
<span class="t" style="left:507.00px;top:131.00px;font-size:11.2px;line-height:11.2px;color:#949494;font-weight:700;letter-spacing:0.311px;">ADJUDICATIONS</span>
<span class="t" style="left:633.75px;top:131.00px;font-size:11.2px;line-height:11.2px;color:#949494;font-weight:700;letter-spacing:0.264px;">HISTORY</span>
<span class="t" style="left:715.50px;top:131.00px;font-size:11.2px;line-height:11.2px;color:#949494;font-weight:700;letter-spacing:-0.021px;">NOTES</span>
<span class="t" style="left:785.00px;top:131.00px;font-size:11.2px;line-height:11.2px;color:#949494;font-weight:700;letter-spacing:0.533px;">TIMELINE</span>
<div style="left:602.3px;top:119.3px;width:12.900000000000091px;height:12.8px;border-radius:6.4px;background:#c3c3c3"></div>
<span class="t" style="left:606.64px;top:123.00px;font-size:7.6px;line-height:7.6px;color:#fff;font-weight:700;">1</span>
<div style="left:679.5px;top:119.3px;width:18.5px;height:12.8px;border-radius:6.4px;background:#c3c3c3"></div>
<span class="t" style="left:684.52px;top:123.00px;font-size:7.6px;line-height:7.6px;color:#fff;font-weight:700;letter-spacing:-0.000px;">10</span>
<div style="left:836px;top:119.3px;width:19px;height:12.8px;border-radius:6.4px;background:#c3c3c3"></div>
<span class="t" style="left:841.27px;top:123.00px;font-size:7.6px;line-height:7.6px;color:#fff;font-weight:700;letter-spacing:-0.000px;">10</span>
<div style="left:171.7px;top:156px;width:837.3px;height:436.8px;background:#f5f5f5;border:1px solid #e6e6e6;box-sizing:border-box"></div>
<svg class="a" style="left:172px;top:157px;overflow:hidden" width="823.2" height="386.8" viewBox="172 157 823.2 386.8" font-family="'Liberation Sans',sans-serif">
<defs><filter id="sh" x="-10%" y="-10%" width="120%" height="120%"><feGaussianBlur stdDeviation="5.5"/></filter></defs>
<rect x="172" y="157" width="824" height="387" fill="#999"/>
<rect x="275.5" y="176.5" width="617.4" height="420" fill="#000" opacity=".55" filter="url(#sh)"/>
<rect x="277" y="178" width="613.4" height="420" fill="#fff"/>
<path d="M295.10 193.30h10.36v1.48h-10.36zM306.94 193.30h7.40v1.48h-7.40zM315.82 193.30h2.96v1.48h-2.96zM321.74 193.30h10.36v1.48h-10.36zM295.10 194.78h1.48v1.48h-1.48zM303.98 194.78h1.48v1.48h-1.48zM306.94 194.78h4.44v1.48h-4.44zM312.86 194.78h2.96v1.48h-2.96zM317.30 194.78h2.96v1.48h-2.96zM321.74 194.78h1.48v1.48h-1.48zM330.62 194.78h1.48v1.48h-1.48zM295.10 196.26h1.48v1.48h-1.48zM298.06 196.26h4.44v1.48h-4.44zM303.98 196.26h1.48v1.48h-1.48zM311.38 196.26h1.48v1.48h-1.48zM317.30 196.26h1.48v1.48h-1.48zM321.74 196.26h1.48v1.48h-1.48zM324.70 196.26h4.44v1.48h-4.44zM330.62 196.26h1.48v1.48h-1.48zM295.10 197.74h1.48v1.48h-1.48zM298.06 197.74h4.44v1.48h-4.44zM303.98 197.74h1.48v1.48h-1.48zM308.42 197.74h4.44v1.48h-4.44zM314.34 197.74h2.96v1.48h-2.96zM321.74 197.74h1.48v1.48h-1.48zM324.70 197.74h4.44v1.48h-4.44zM330.62 197.74h1.48v1.48h-1.48zM295.10 199.22h1.48v1.48h-1.48zM298.06 199.22h4.44v1.48h-4.44zM303.98 199.22h1.48v1.48h-1.48zM306.94 199.22h1.48v1.48h-1.48zM317.30 199.22h1.48v1.48h-1.48zM321.74 199.22h1.48v1.48h-1.48zM324.70 199.22h4.44v1.48h-4.44zM330.62 199.22h1.48v1.48h-1.48zM295.10 200.70h1.48v1.48h-1.48zM303.98 200.70h1.48v1.48h-1.48zM306.94 200.70h2.96v1.48h-2.96zM312.86 200.70h7.40v1.48h-7.40zM321.74 200.70h1.48v1.48h-1.48zM330.62 200.70h1.48v1.48h-1.48zM295.10 202.18h10.36v1.48h-10.36zM312.86 202.18h4.44v1.48h-4.44zM321.74 202.18h10.36v1.48h-10.36zM309.90 203.66h1.48v1.48h-1.48zM315.82 203.66h4.44v1.48h-4.44zM295.10 205.14h1.48v1.48h-1.48zM302.50 205.14h2.96v1.48h-2.96zM306.94 205.14h1.48v1.48h-1.48zM311.38 205.14h2.96v1.48h-2.96zM317.30 205.14h4.44v1.48h-4.44zM324.70 205.14h1.48v1.48h-1.48zM330.62 205.14h1.48v1.48h-1.48zM296.58 206.62h2.96v1.48h-2.96zM305.46 206.62h1.48v1.48h-1.48zM309.90 206.62h5.92v1.48h-5.92zM317.30 206.62h4.44v1.48h-4.44zM323.22 206.62h2.96v1.48h-2.96zM329.14 206.62h1.48v1.48h-1.48zM299.54 208.10h5.92v1.48h-5.92zM306.94 208.10h2.96v1.48h-2.96zM312.86 208.10h1.48v1.48h-1.48zM318.78 208.10h1.48v1.48h-1.48zM321.74 208.10h2.96v1.48h-2.96zM295.10 209.58h1.48v1.48h-1.48zM302.50 209.58h1.48v1.48h-1.48zM305.46 209.58h1.48v1.48h-1.48zM312.86 209.58h1.48v1.48h-1.48zM318.78 209.58h8.88v1.48h-8.88zM295.10 211.06h1.48v1.48h-1.48zM299.54 211.06h1.48v1.48h-1.48zM303.98 211.06h1.48v1.48h-1.48zM306.94 211.06h2.96v1.48h-2.96zM312.86 211.06h2.96v1.48h-2.96zM317.30 211.06h4.44v1.48h-4.44zM323.22 211.06h1.48v1.48h-1.48zM326.18 211.06h4.44v1.48h-4.44zM296.58 212.54h1.48v1.48h-1.48zM302.50 212.54h4.44v1.48h-4.44zM308.42 212.54h4.44v1.48h-4.44zM315.82 212.54h2.96v1.48h-2.96zM323.22 212.54h2.96v1.48h-2.96zM327.66 212.54h2.96v1.48h-2.96zM298.06 214.02h1.48v1.48h-1.48zM301.02 214.02h1.48v1.48h-1.48zM303.98 214.02h2.96v1.48h-2.96zM309.90 214.02h2.96v1.48h-2.96zM314.34 214.02h10.36v1.48h-10.36zM326.18 214.02h1.48v1.48h-1.48zM329.14 214.02h2.96v1.48h-2.96zM295.10 215.50h4.44v1.48h-4.44zM302.50 215.50h2.96v1.48h-2.96zM306.94 215.50h1.48v1.48h-1.48zM309.90 215.50h2.96v1.48h-2.96zM314.34 215.50h1.48v1.48h-1.48zM320.26 215.50h1.48v1.48h-1.48zM326.18 215.50h5.92v1.48h-5.92zM295.10 216.98h1.48v1.48h-1.48zM298.06 216.98h4.44v1.48h-4.44zM306.94 216.98h10.36v1.48h-10.36zM318.78 216.98h13.32v1.48h-13.32zM306.94 218.46h4.44v1.48h-4.44zM318.78 218.46h1.48v1.48h-1.48zM324.70 218.46h1.48v1.48h-1.48zM329.14 218.46h1.48v1.48h-1.48zM295.10 219.94h10.36v1.48h-10.36zM315.82 219.94h4.44v1.48h-4.44zM321.74 219.94h1.48v1.48h-1.48zM324.70 219.94h1.48v1.48h-1.48zM330.62 219.94h1.48v1.48h-1.48zM295.10 221.42h1.48v1.48h-1.48zM303.98 221.42h1.48v1.48h-1.48zM306.94 221.42h4.44v1.48h-4.44zM312.86 221.42h1.48v1.48h-1.48zM317.30 221.42h2.96v1.48h-2.96zM324.70 221.42h1.48v1.48h-1.48zM327.66 221.42h4.44v1.48h-4.44zM295.10 222.90h1.48v1.48h-1.48zM298.06 222.90h4.44v1.48h-4.44zM303.98 222.90h1.48v1.48h-1.48zM308.42 222.90h1.48v1.48h-1.48zM311.38 222.90h4.44v1.48h-4.44zM317.30 222.90h8.88v1.48h-8.88zM327.66 222.90h4.44v1.48h-4.44zM295.10 224.38h1.48v1.48h-1.48zM298.06 224.38h4.44v1.48h-4.44zM303.98 224.38h1.48v1.48h-1.48zM311.38 224.38h1.48v1.48h-1.48zM314.34 224.38h13.32v1.48h-13.32zM329.14 224.38h1.48v1.48h-1.48zM295.10 225.86h1.48v1.48h-1.48zM298.06 225.86h4.44v1.48h-4.44zM303.98 225.86h1.48v1.48h-1.48zM309.90 225.86h7.40v1.48h-7.40zM318.78 225.86h1.48v1.48h-1.48zM321.74 225.86h2.96v1.48h-2.96zM326.18 225.86h2.96v1.48h-2.96zM295.10 227.34h1.48v1.48h-1.48zM303.98 227.34h1.48v1.48h-1.48zM306.94 227.34h1.48v1.48h-1.48zM311.38 227.34h2.96v1.48h-2.96zM315.82 227.34h5.92v1.48h-5.92zM324.70 227.34h1.48v1.48h-1.48zM327.66 227.34h1.48v1.48h-1.48zM330.62 227.34h1.48v1.48h-1.48zM295.10 228.82h10.36v1.48h-10.36zM306.94 228.82h11.84v1.48h-11.84zM323.22 228.82h2.96v1.48h-2.96zM327.66 228.82h4.44v1.48h-4.44z" fill="#111"/>
<path d="M294.6 273.1H868.9" stroke="#ea1f2a" stroke-width="1.6" fill="none"/>
<path d="M295.0 298.2H868.5" stroke="#ea1f2a" stroke-width="0.6" fill="none"/>
<path d="M295.0 320.9H868.5" stroke="#ea1f2a" stroke-width="0.6" fill="none"/>
<path d="M295.0 346H868.5" stroke="#ea1f2a" stroke-width="0.6" fill="none"/>
<path d="M295.0 395H868.5" stroke="#ea1f2a" stroke-width="0.6" fill="none"/>
<path d="M295.0 491.4H868.5" stroke="#ea1f2a" stroke-width="0.6" fill="none"/>
<path d="M295.0 515.5H868.5" stroke="#ea1f2a" stroke-width="0.6" fill="none"/>
<path d="M295.0 369.2H503.2" stroke="#ea1f2a" stroke-width="0.6" fill="none"/>
<path d="M295.0 417.8H503.2" stroke="#ea1f2a" stroke-width="0.6" fill="none"/>
<path d="M295.0 441H503.2" stroke="#ea1f2a" stroke-width="0.6" fill="none"/>
<path d="M295.0 467.3H503.2" stroke="#ea1f2a" stroke-width="0.6" fill="none"/>
<path d="M648.9 369.2H868.5" stroke="#ea1f2a" stroke-width="0.6" fill="none"/>
<path d="M648.9 418.3H868.5" stroke="#ea1f2a" stroke-width="0.6" fill="none"/>
<path d="M648.9 443.4H868.5" stroke="#ea1f2a" stroke-width="0.6" fill="none"/>
<path d="M648.9 467.2H868.5" stroke="#ea1f2a" stroke-width="0.6" fill="none"/>
<path d="M295.0 272.9V560" stroke="#ea1f2a" stroke-width="0.6" fill="none"/>
<path d="M868.5 272.9V560" stroke="#ea1f2a" stroke-width="0.6" fill="none"/>
<path d="M648.9 272.9V560" stroke="#ea1f2a" stroke-width="1.1" fill="none"/>
<path d="M503.2 298.2V515.5" stroke="#ea1f2a" stroke-width="0.6" fill="none"/>
<path d="M476.5 346V369.2" stroke="#ea1f2a" stroke-width="0.6" fill="none"/>
<path d="M389 369.2V395" stroke="#ea1f2a" stroke-width="0.6" fill="none"/>
<path d="M821.4 346V369.2" stroke="#ea1f2a" stroke-width="0.6" fill="none"/>
<path d="M742.4 369.2V395" stroke="#ea1f2a" stroke-width="0.6" fill="none"/>
<path d="M295.3 263.4V272.3M302.35 263.4V272.3M309.40000000000003 263.4V272.3M316.45 263.4V272.3M295.3 263.4H316.45" stroke="#ea1f2a" stroke-width=".5" fill="none" opacity=".8"/>
<path d="M847.3 263.4V272.3M854.3499999999999 263.4V272.3M861.4 263.4V272.3M868.4499999999999 263.4V272.3M847.3 263.4H868.4499999999999" stroke="#ea1f2a" stroke-width=".5" fill="none" opacity=".8"/>
<path d="M532.8 306V320" stroke="#ea1f2a" stroke-width=".6" stroke-dasharray="1 1" opacity=".55" fill="none"/>
<path d="M554.6 306V320" stroke="#ea1f2a" stroke-width=".6" stroke-dasharray="1 1" opacity=".55" fill="none"/>
<path d="M692.4 427V442.5" stroke="#ea1f2a" stroke-width=".6" stroke-dasharray="1 1" opacity=".55" fill="none"/>
<path d="M713.5 427V442.5" stroke="#ea1f2a" stroke-width=".6" stroke-dasharray="1 1" opacity=".55" fill="none"/>
<path d="M666.7 452V466" stroke="#ea1f2a" stroke-width=".6" stroke-dasharray="1 1" opacity=".55" fill="none"/>
<path d="M612.7 460.8V465.2H633.6V460.8" stroke="#ea1f2a" stroke-width=".5" fill="none" opacity=".6"/>
<rect x="295.3" y="285.2" width="11.3" height="11.1" fill="none" stroke="#ea1f2a" stroke-width=".7"/>
<rect x="344.5" y="285.2" width="11.5" height="11.1" fill="none" stroke="#ea1f2a" stroke-width=".7"/>
<text x="350.2" y="294.2" font-family="'Liberation Mono',monospace" font-size="10.6" text-anchor="middle" fill="#222" stroke="#222" stroke-width=".4" transform="translate(350.2 0) scale(1.13 1) translate(-350.2 0)">X</text>
<rect x="395" y="285.2" width="11.8" height="11.1" fill="none" stroke="#ea1f2a" stroke-width=".7"/>
<rect x="460.3" y="285.2" width="12.1" height="11.1" fill="none" stroke="#ea1f2a" stroke-width=".7"/>
<rect x="511.5" y="285.2" width="11.9" height="11.1" fill="none" stroke="#ea1f2a" stroke-width=".7"/>
<rect x="569.8" y="285.2" width="11.5" height="11.1" fill="none" stroke="#ea1f2a" stroke-width=".7"/>
<rect x="613.3" y="285.2" width="11.4" height="11.1" fill="none" stroke="#ea1f2a" stroke-width=".7"/>
<rect x="591" y="308.9" width="11.8" height="11.1" fill="none" stroke="#ea1f2a" stroke-width=".7"/>
<text x="596.9" y="317.9" font-family="'Liberation Mono',monospace" font-size="10.6" text-anchor="middle" fill="#222" stroke="#222" stroke-width=".4" transform="translate(596.9 0) scale(1.13 1) translate(-596.9 0)">X</text>
<rect x="627.5" y="308.9" width="11.9" height="11.1" fill="none" stroke="#ea1f2a" stroke-width=".7"/>
<rect x="526.3" y="333.6" width="11.5" height="10.9" fill="none" stroke="#ea1f2a" stroke-width=".7"/>
<text x="532.0" y="342.4" font-family="'Liberation Mono',monospace" font-size="10.6" text-anchor="middle" fill="#222" stroke="#222" stroke-width=".4" transform="translate(532.0 0) scale(1.13 1) translate(-532.0 0)">X</text>
<rect x="562.9" y="333.6" width="11.4" height="10.9" fill="none" stroke="#ea1f2a" stroke-width=".7"/>
<rect x="591.5" y="333.6" width="11.5" height="10.9" fill="none" stroke="#ea1f2a" stroke-width=".7"/>
<rect x="628" y="333.6" width="11.6" height="10.9" fill="none" stroke="#ea1f2a" stroke-width=".7"/>
<rect x="541" y="430.6" width="11.4" height="10.9" fill="none" stroke="#ea1f2a" stroke-width=".7"/>
<rect x="584.2" y="430.6" width="11.5" height="10.9" fill="none" stroke="#ea1f2a" stroke-width=".7"/>
<rect x="541" y="454.3" width="11.4" height="11.1" fill="none" stroke="#ea1f2a" stroke-width=".7"/>
<rect x="584.2" y="454.3" width="11.5" height="11.1" fill="none" stroke="#ea1f2a" stroke-width=".7"/>
<rect x="541" y="478.2" width="11.4" height="11.0" fill="none" stroke="#ea1f2a" stroke-width=".7"/>
<rect x="584.2" y="478.2" width="11.5" height="11.0" fill="none" stroke="#ea1f2a" stroke-width=".7"/>
<rect x="780" y="430.2" width="11.8" height="11.3" fill="none" stroke="#ea1f2a" stroke-width=".7"/>
<text x="785.9" y="439.4" font-family="'Liberation Mono',monospace" font-size="10.6" text-anchor="middle" fill="#222" stroke="#222" stroke-width=".4" transform="translate(785.9 0) scale(1.13 1) translate(-785.9 0)">X</text>
<rect x="831.1" y="430.2" width="11.5" height="11.3" fill="none" stroke="#ea1f2a" stroke-width=".7"/>
<rect x="663.3" y="502.5" width="12.3" height="11.3" fill="none" stroke="#ea1f2a" stroke-width=".7"/>
<rect x="700.3" y="502.5" width="11.8" height="11.3" fill="none" stroke="#ea1f2a" stroke-width=".7"/>
<text x="706.2" y="511.7" font-family="'Liberation Mono',monospace" font-size="10.6" text-anchor="middle" fill="#222" stroke="#222" stroke-width=".4" transform="translate(706.2 0) scale(1.13 1) translate(-706.2 0)">X</text>
<text x="295" y="244.2" font-size="11.15" font-weight="700" fill="#ea1f2a" textLength="187.5" lengthAdjust="spacingAndGlyphs">HEALTH INSURANCE CLAIM FORM</text>
<text x="295.0" y="256.3" font-size="6.08" fill="#ea1f2a" stroke="#ea1f2a" stroke-width=".12" textLength="203.8" lengthAdjust="spacingAndGlyphs">APPROVED BY NATIONAL UNIFORM CLAIM COMMITTEE (NUCC) 02/12</text>
<text x="584.0" y="286.5" font-size="6.08" fill="#ea1f2a" stroke="#ea1f2a" stroke-width=".12" textLength="27.3" lengthAdjust="spacingAndGlyphs">BLK LUNG</text>
<text x="627.5" y="281.2" font-size="6.08" fill="#ea1f2a" stroke="#ea1f2a" stroke-width=".12" textLength="19.4" lengthAdjust="spacingAndGlyphs">OTHER</text>
<text x="318.0" y="267.3" font-size="6.08" fill="#ea1f2a" stroke="#ea1f2a" stroke-width=".12">PICA</text>
<text x="829.7" y="267.3" font-size="6.08" fill="#ea1f2a" stroke="#ea1f2a" stroke-width=".12">PICA</text>
<text x="297.7" y="281.3" font-size="6.08" fill="#ea1f2a" stroke="#ea1f2a" stroke-width=".12">1.</text>
<text x="309.0" y="281.3" font-size="6.08" fill="#ea1f2a" stroke="#ea1f2a" stroke-width=".12">MEDICARE</text>
<text x="359.3" y="281.3" font-size="6.08" fill="#ea1f2a" stroke="#ea1f2a" stroke-width=".12">MEDICAID</text>
<text x="411.3" y="281.3" font-size="6.08" fill="#ea1f2a" stroke="#ea1f2a" stroke-width=".12">TRICARE</text>
<text x="475.0" y="281.2" font-size="6.08" fill="#ea1f2a" stroke="#ea1f2a" stroke-width=".12">CHAMPVA</text>
<text x="526.3" y="280.6" font-size="6.08" fill="#ea1f2a" stroke="#ea1f2a" stroke-width=".12">GROUP</text>
<text x="526.3" y="286.5" font-size="6.08" fill="#ea1f2a" stroke="#ea1f2a" stroke-width=".12">HEALTH PLAN</text>
<text x="584.0" y="280.6" font-size="6.08" fill="#ea1f2a" stroke="#ea1f2a" stroke-width=".12">FECA</text>
<text x="651.9" y="281.0" font-size="6.08" fill="#ea1f2a" stroke="#ea1f2a" stroke-width=".12">1a. INSURED&#x27;S I.D. NUMBER</text>
<text x="785.7" y="281.0" font-size="6.08" fill="#ea1f2a" stroke="#ea1f2a" stroke-width=".12">(For Program in Item 1)</text>
<text x="297.3" y="305.1" font-size="6.08" fill="#ea1f2a" stroke="#ea1f2a" stroke-width=".12">2. PATIENT&#x27;S NAME (Last Name, First Name, Middle Initial)</text>
<text x="506.0" y="304.7" font-size="6.08" fill="#ea1f2a" stroke="#ea1f2a" stroke-width=".12">3. PATIENT&#x27;S BIRTH DATE</text>
<text x="607.7" y="305.1" font-size="6.08" fill="#ea1f2a" stroke="#ea1f2a" stroke-width=".12">SEX</text>
<text x="516.8" y="309.1" font-size="6.08" fill="#ea1f2a" stroke="#ea1f2a" stroke-width=".12">MM</text>
<text x="540.5" y="309.1" font-size="6.08" fill="#ea1f2a" stroke="#ea1f2a" stroke-width=".12">DD</text>
<text x="566.8" y="309.1" font-size="6.08" fill="#ea1f2a" stroke="#ea1f2a" stroke-width=".12">YY</text>
<text x="651.9" y="305.1" font-size="6.08" fill="#ea1f2a" stroke="#ea1f2a" stroke-width=".12">4. INSURED&#x27;S NAME (Last Name, First Name, Middle Initial)</text>
<text x="297.3" y="327.8" font-size="6.08" fill="#ea1f2a" stroke="#ea1f2a" stroke-width=".12">5. PATIENT&#x27;S ADDRESS (No., Street)</text>
<text x="506.0" y="327.8" font-size="6.08" fill="#ea1f2a" stroke="#ea1f2a" stroke-width=".12">6. PATIENT RELATIONSHIP TO INSURED</text>
<text x="651.9" y="327.8" font-size="6.08" fill="#ea1f2a" stroke="#ea1f2a" stroke-width=".12">7. INSURED&#x27;S ADDRESS (No., Street)</text>
<text x="514.5" y="340.9" font-size="6.08" fill="#ea1f2a" stroke="#ea1f2a" stroke-width=".12">Self</text>
<text x="541.0" y="340.9" font-size="6.08" fill="#ea1f2a" stroke="#ea1f2a" stroke-width=".12">Spouse</text>
<text x="577.0" y="340.9" font-size="6.08" fill="#ea1f2a" stroke="#ea1f2a" stroke-width=".12">Child</text>
<text x="611.3" y="340.9" font-size="6.08" fill="#ea1f2a" stroke="#ea1f2a" stroke-width=".12">Other</text>
<text x="297.3" y="353.1" font-size="6.08" fill="#ea1f2a" stroke="#ea1f2a" stroke-width=".12">CITY</text>
<text x="478.9" y="353.1" font-size="6.08" fill="#ea1f2a" stroke="#ea1f2a" stroke-width=".12">STATE</text>
<text x="506.0" y="353.1" font-size="6.08" fill="#ea1f2a" stroke="#ea1f2a" stroke-width=".12">8. RESERVED FOR NUCC USE</text>
<text x="651.9" y="353.1" font-size="6.08" fill="#ea1f2a" stroke="#ea1f2a" stroke-width=".12">CITY</text>
<text x="823.8" y="353.1" font-size="6.08" fill="#ea1f2a" stroke="#ea1f2a" stroke-width=".12">STATE</text>
<text x="297.3" y="376.3" font-size="6.08" fill="#ea1f2a" stroke="#ea1f2a" stroke-width=".12">ZIP CODE</text>
<text x="392.0" y="376.3" font-size="6.08" fill="#ea1f2a" stroke="#ea1f2a" stroke-width=".12">TELEPHONE (Include Area Code)</text>
<text x="651.9" y="376.3" font-size="6.08" fill="#ea1f2a" stroke="#ea1f2a" stroke-width=".12">ZIP CODE</text>
<text x="745.7" y="376.3" font-size="6.08" fill="#ea1f2a" stroke="#ea1f2a" stroke-width=".12">TELEPHONE (Include Area Code)</text>
<text x="297.3" y="402.1" font-size="6.08" fill="#ea1f2a" stroke="#ea1f2a" stroke-width=".12">9. OTHER INSURED&#x27;S NAME (Last Name, First Name, Middle Initial)</text>
<text x="506.0" y="402.1" font-size="6.08" fill="#ea1f2a" stroke="#ea1f2a" stroke-width=".12">10. IS PATIENT&#x27;S CONDITION RELATED TO:</text>
<text x="651.9" y="402.1" font-size="6.08" fill="#ea1f2a" stroke="#ea1f2a" stroke-width=".12">11. INSURED&#x27;S POLICY GROUP OR FECA NUMBER</text>
<text x="297.3" y="425.5" font-size="6.08" fill="#ea1f2a" stroke="#ea1f2a" stroke-width=".12">a. OTHER INSURED&#x27;S POLICY OR GROUP NUMBER</text>
<text x="506.0" y="425.5" font-size="6.08" fill="#ea1f2a" stroke="#ea1f2a" stroke-width=".12">a. EMPLOYMENT? (Current or Previous)</text>
<text x="651.9" y="425.8" font-size="6.08" fill="#ea1f2a" stroke="#ea1f2a" stroke-width=".12">a. INSURED&#x27;S DATE OF BIRTH</text>
<text x="803.4" y="425.8" font-size="6.08" fill="#ea1f2a" stroke="#ea1f2a" stroke-width=".12">SEX</text>
<text x="677.2" y="431.3" font-size="6.08" fill="#ea1f2a" stroke="#ea1f2a" stroke-width=".12">MM</text>
<text x="699.9" y="431.3" font-size="6.08" fill="#ea1f2a" stroke="#ea1f2a" stroke-width=".12">DD</text>
<text x="727.5" y="431.3" font-size="6.08" fill="#ea1f2a" stroke="#ea1f2a" stroke-width=".12">YY</text>
<text x="555.0" y="438.2" font-size="6.08" fill="#ea1f2a" stroke="#ea1f2a" stroke-width=".12">YES</text>
<text x="598.5" y="438.2" font-size="6.08" fill="#ea1f2a" stroke="#ea1f2a" stroke-width=".12">NO</text>
<text x="555.0" y="462.1" font-size="6.08" fill="#ea1f2a" stroke="#ea1f2a" stroke-width=".12">YES</text>
<text x="598.5" y="462.1" font-size="6.08" fill="#ea1f2a" stroke="#ea1f2a" stroke-width=".12">NO</text>
<text x="555.0" y="486.1" font-size="6.08" fill="#ea1f2a" stroke="#ea1f2a" stroke-width=".12">YES</text>
<text x="598.5" y="486.1" font-size="6.08" fill="#ea1f2a" stroke="#ea1f2a" stroke-width=".12">NO</text>
<text x="297.3" y="448.5" font-size="6.08" fill="#ea1f2a" stroke="#ea1f2a" stroke-width=".12">b. RESERVED FOR NUCC USE</text>
<text x="506.0" y="448.5" font-size="6.08" fill="#ea1f2a" stroke="#ea1f2a" stroke-width=".12">b. AUTO ACCIDENT?</text>
<text x="605.0" y="452.7" font-size="6.08" fill="#ea1f2a" stroke="#ea1f2a" stroke-width=".12">PLACE (State)</text>
<text x="651.9" y="450.7" font-size="6.08" fill="#ea1f2a" stroke="#ea1f2a" stroke-width=".12">b. OTHER CLAIM ID (Designated by NUCC)</text>
<text x="297.3" y="473.9" font-size="6.08" fill="#ea1f2a" stroke="#ea1f2a" stroke-width=".12">c. RESERVED FOR NUCC USE</text>
<text x="506.0" y="473.9" font-size="6.08" fill="#ea1f2a" stroke="#ea1f2a" stroke-width=".12">c. OTHER ACCIDENT?</text>
<text x="651.9" y="474.2" font-size="6.08" fill="#ea1f2a" stroke="#ea1f2a" stroke-width=".12">c. INSURANCE PLAN NAME OR PROGRAM NAME</text>
<text x="297.3" y="498.3" font-size="6.08" fill="#ea1f2a" stroke="#ea1f2a" stroke-width=".12">d. INSURANCE PLAN NAME OR PROGRAM NAME</text>
<text x="506.0" y="498.3" font-size="6.08" fill="#ea1f2a" stroke="#ea1f2a" stroke-width=".12">10d. CLAIM CODES (Designated by NUCC)</text>
<text x="651.9" y="498.4" font-size="6.08" fill="#ea1f2a" stroke="#ea1f2a" stroke-width=".12">d. IS THERE ANOTHER HEALTH BENEFIT PLAN?</text>
<text x="678.0" y="510.9" font-size="6.08" fill="#ea1f2a" stroke="#ea1f2a" stroke-width=".12">YES</text>
<text x="714.0" y="510.9" font-size="6.08" fill="#ea1f2a" stroke="#ea1f2a" stroke-width=".12">NO</text>
<text x="308.5" y="292.3" font-size="5.9" fill="#ea1f2a" stroke="#ea1f2a" stroke-width=".12" font-style="italic" textLength="32.3" lengthAdjust="spacingAndGlyphs">(Medicare#)</text>
<text x="358.0" y="292.3" font-size="5.9" fill="#ea1f2a" stroke="#ea1f2a" stroke-width=".12" font-style="italic" textLength="32.0" lengthAdjust="spacingAndGlyphs">(Medicaid#)</text>
<text x="410.0" y="292.3" font-size="5.9" fill="#ea1f2a" stroke="#ea1f2a" stroke-width=".12" font-style="italic" textLength="30.4" lengthAdjust="spacingAndGlyphs">(ID#/DoD#)</text>
<text x="475.0" y="292.3" font-size="5.9" fill="#ea1f2a" stroke="#ea1f2a" stroke-width=".12" font-style="italic" textLength="34.0" lengthAdjust="spacingAndGlyphs">(Member ID#)</text>
<text x="526.3" y="292.3" font-size="5.9" fill="#ea1f2a" stroke="#ea1f2a" stroke-width=".12" font-style="italic" textLength="12.5" lengthAdjust="spacingAndGlyphs">(ID#)</text>
<text x="584.0" y="292.3" font-size="5.9" fill="#ea1f2a" stroke="#ea1f2a" stroke-width=".12" font-style="italic" textLength="12.0" lengthAdjust="spacingAndGlyphs">(ID#)</text>
<text x="627.0" y="292.3" font-size="5.9" fill="#ea1f2a" stroke="#ea1f2a" stroke-width=".12" font-style="italic" textLength="13.0" lengthAdjust="spacingAndGlyphs">(ID#)</text>
<text x="585.6" y="316.2" font-size="5.2" fill="#ea1f2a" stroke="#ea1f2a" stroke-width=".12" opacity="0.75">M</text>
<text x="621.8" y="316.2" font-size="5.2" fill="#ea1f2a" stroke="#ea1f2a" stroke-width=".12" opacity="0.75">F</text>
<text x="772.8" y="436.4" font-size="5.2" fill="#ea1f2a" stroke="#ea1f2a" stroke-width=".12" opacity="0.75">M</text>
<text x="825.4" y="436.4" font-size="5.2" fill="#ea1f2a" stroke="#ea1f2a" stroke-width=".12" opacity="0.75">F</text>
<text x="740.8" y="510.7" font-size="5.6" fill="#ea1f2a" stroke="#ea1f2a" stroke-width=".12" textLength="96.8" lengthAdjust="spacingAndGlyphs"><tspan font-weight="700" font-style="italic">If yes</tspan>, complete items 9, 9a, and 9d.</text>
<text x="368.8" y="522.0" font-size="6.08" fill="#ea1f2a" stroke="#ea1f2a" stroke-width=".12" font-weight="700" textLength="204.6" lengthAdjust="spacingAndGlyphs">READ BACK OF FORM BEFORE COMPLETING &amp; SIGNING THIS FORM.</text>
<text x="297.0" y="528.9" font-size="6.08" fill="#ea1f2a" stroke="#ea1f2a" stroke-width=".12" textLength="161.7" lengthAdjust="spacingAndGlyphs">12. PATIENT&#x27;S OR AUTHORIZED PERSON&#x27;S SIGNATURE</text>
<text x="463.3" y="528.7" font-size="5.4" fill="#ea1f2a" stroke="#ea1f2a" stroke-width=".12" textLength="177.1" lengthAdjust="spacingAndGlyphs">I authorize the release of any medical or other information necessary</text>
<text x="307.0" y="536.0" font-size="5.4" fill="#ea1f2a" stroke="#ea1f2a" stroke-width=".12" textLength="321.7" lengthAdjust="spacingAndGlyphs">to process this claim. I also request payment of government benefits either to myself or to the party who accepts assignment</text>
<text x="307.0" y="543.1" font-size="5.4" fill="#ea1f2a" stroke="#ea1f2a" stroke-width=".12">below.</text>
<text x="651.3" y="522.4" font-size="6.08" fill="#ea1f2a" stroke="#ea1f2a" stroke-width=".12" textLength="163.2" lengthAdjust="spacingAndGlyphs">13. INSURED&#x27;S OR AUTHORIZED PERSON&#x27;S SIGNATURE</text>
<text x="816.5" y="522.2" font-size="5.4" fill="#ea1f2a" stroke="#ea1f2a" stroke-width=".12" textLength="28.5" lengthAdjust="spacingAndGlyphs">I authorize</text>
<text x="661.1" y="530.1" font-size="5.4" fill="#ea1f2a" stroke="#ea1f2a" stroke-width=".12" textLength="192.9" lengthAdjust="spacingAndGlyphs">payment of medical benefits to the undersigned physician or supplier for</text>
<text x="661.1" y="536.9" font-size="5.4" fill="#ea1f2a" stroke="#ea1f2a" stroke-width=".12" textLength="69.2" lengthAdjust="spacingAndGlyphs">services described below.</text>
<text transform="translate(875.8 255.6) rotate(-90)" font-size="8.05" font-weight="700" fill="#ea1f2a" textLength="36.9" lengthAdjust="spacingAndGlyphs">CARRIER</text>
<text transform="translate(875.8 501) rotate(-90)" font-size="8.05" font-weight="700" fill="#ea1f2a" textLength="151.8" lengthAdjust="spacingAndGlyphs">PATIENT AND INSURED INFORMATION</text>
<path d="M873.7 201V217M873.7 257V269M870.2 274.6H878.8M873.7 281V341M873.7 506V560" stroke="#ea1f2a" stroke-width=".7" fill="none"/>
<path d="M873.7 198.2L870.5 205.1L873.7 203.1L876.9000000000001 205.1z" fill="#ea1f2a"/>
<path d="M873.7 271.5L870.5 264.6L873.7 266.6L876.9000000000001 264.6z" fill="#ea1f2a"/>
<path d="M873.7 277.6L870.5 284.5L873.7 282.5L876.9000000000001 284.5z" fill="#ea1f2a"/>
<text x="552" y="213.9" font-family="'Liberation Mono',monospace" font-size="10.8" stroke="#262626" stroke-width="0.22" fill="#262626" textLength="58.7" lengthAdjust="spacingAndGlyphs" xml:space="preserve">Medicaid</text>
<text x="297.7" y="316" font-family="'Liberation Mono',monospace" font-size="10.6" stroke="#262626" stroke-width="0.22" fill="#262626" textLength="101.1" lengthAdjust="spacingAndGlyphs" xml:space="preserve">Cooper, Sherry</text>
<text x="297.7" y="341.5" font-family="'Liberation Mono',monospace" font-size="10.6" stroke="#262626" stroke-width="0.22" fill="#262626" textLength="115.5" lengthAdjust="spacingAndGlyphs" xml:space="preserve">1234 Main Street</text>
<text x="297.7" y="363.8" font-family="'Liberation Mono',monospace" font-size="10.6" stroke="#262626" stroke-width="0.22" fill="#262626" textLength="36.1" lengthAdjust="spacingAndGlyphs" xml:space="preserve">Tyler</text>
<text x="297.7" y="390" font-family="'Liberation Mono',monospace" font-size="12.3" fill="#262626" textLength="35.5" lengthAdjust="spacingAndGlyphs" xml:space="preserve">75703</text>
<text x="652.8" y="316" font-family="'Liberation Mono',monospace" font-size="10.6" stroke="#262626" stroke-width="0.22" fill="#262626" textLength="101.1" lengthAdjust="spacingAndGlyphs" xml:space="preserve">Cooper, Sherry</text>
<text x="652.8" y="341.5" font-family="'Liberation Mono',monospace" font-size="10.6" stroke="#262626" stroke-width="0.22" fill="#262626" textLength="115.5" lengthAdjust="spacingAndGlyphs" xml:space="preserve">1234 Main Street</text>
<text x="652.8" y="363.8" font-family="'Liberation Mono',monospace" font-size="10.6" stroke="#262626" stroke-width="0.22" fill="#262626" textLength="36.1" lengthAdjust="spacingAndGlyphs" xml:space="preserve">Tyler</text>
<text x="652.8" y="390" font-family="'Liberation Mono',monospace" font-size="12.3" fill="#262626" textLength="35.5" lengthAdjust="spacingAndGlyphs" xml:space="preserve">75703</text>
<text x="479.5" y="363.8" font-family="'Liberation Mono',monospace" font-size="10.6" stroke="#262626" stroke-width="0.22" fill="#262626" textLength="14.4" lengthAdjust="spacingAndGlyphs" xml:space="preserve">TX</text>
<text x="824.8" y="363.8" font-family="'Liberation Mono',monospace" font-size="10.6" stroke="#262626" stroke-width="0.22" fill="#262626" textLength="14.4" lengthAdjust="spacingAndGlyphs" xml:space="preserve">TX</text>
<text x="652.8" y="292.7" font-family="'Liberation Mono',monospace" font-size="11.4" stroke="#262626" stroke-width="0.15" fill="#262626" textLength="49.8" lengthAdjust="spacingAndGlyphs" xml:space="preserve">2345678</text>
<text x="514.5" y="318" font-family="'Liberation Mono',monospace" font-size="12" fill="#262626" textLength="13.5" lengthAdjust="spacingAndGlyphs" xml:space="preserve">02</text>
<text x="536.0" y="318" font-family="'Liberation Mono',monospace" font-size="12" fill="#262626" textLength="13.8" lengthAdjust="spacingAndGlyphs" xml:space="preserve">26</text>
<text x="557.7" y="318" font-family="'Liberation Mono',monospace" font-size="12" fill="#262626" textLength="13.6" lengthAdjust="spacingAndGlyphs" xml:space="preserve">15</text>
<text x="675.6" y="440" font-family="'Liberation Mono',monospace" font-size="12" fill="#262626" textLength="13.5" lengthAdjust="spacingAndGlyphs" xml:space="preserve">02</text>
<text x="697.1" y="440" font-family="'Liberation Mono',monospace" font-size="12" fill="#262626" textLength="13.8" lengthAdjust="spacingAndGlyphs" xml:space="preserve">26</text>
<text x="718.8000000000001" y="440" font-family="'Liberation Mono',monospace" font-size="12" fill="#262626" textLength="13.6" lengthAdjust="spacingAndGlyphs" xml:space="preserve">15</text>
<text x="394.6" y="390.6" font-size="12.6" fill="#ea1f2a" font-family="'Liberation Serif',serif">(</text>
<text x="421.20000000000005" y="390.6" font-size="12.6" fill="#ea1f2a" font-family="'Liberation Serif',serif">)</text>
<text x="399.8" y="390" font-family="'Liberation Mono',monospace" font-size="12.3" fill="#262626" textLength="20.4" lengthAdjust="spacingAndGlyphs" xml:space="preserve">430</text>
<text x="429.2" y="390" font-family="'Liberation Mono',monospace" font-size="11.4" stroke="#262626" stroke-width="0.22" fill="#262626" textLength="56.0" lengthAdjust="spacingAndGlyphs" xml:space="preserve">444-4444</text>
<text x="756.6" y="390.6" font-size="12.6" fill="#ea1f2a" font-family="'Liberation Serif',serif">(</text>
<text x="783.2" y="390.6" font-size="12.6" fill="#ea1f2a" font-family="'Liberation Serif',serif">)</text>
<text x="761.6" y="390" font-family="'Liberation Mono',monospace" font-size="12.3" fill="#262626" textLength="20.4" lengthAdjust="spacingAndGlyphs" xml:space="preserve">430</text>
<text x="791.3" y="390" font-family="'Liberation Mono',monospace" font-size="11.4" stroke="#262626" stroke-width="0.22" fill="#262626" textLength="56.0" lengthAdjust="spacingAndGlyphs" xml:space="preserve">444-4444</text>
</svg>
<div style="left:172.7px;top:543.8px;width:835.3px;height:0.8px;background:#e2e2e2"></div>
<div style="left:995.2px;top:157px;width:13.5px;height:386.8px;background:#f1f1f1"></div>
<div style="left:996.7px;top:169.8px;width:9.6px;height:169px;background:#c1c1c1"></div>
<div style="left:998.6px;top:161.5px;width:0;height:0;border:3.4px solid transparent;border-top:0;border-bottom:3.6px solid #a3a3a3"></div>
<div style="left:998.6px;top:535.3px;width:0;height:0;border:3.4px solid transparent;border-bottom:0;border-top:3.6px solid #505050"></div>
<div style="left:185px;top:554.6px;width:61.599999999999994px;height:26.6px;border-radius:3px;background:#fafafa;border:1px solid #e8575f;box-sizing:border-box"></div>
<svg class="i" style="left:194.60px;top:562.91px;" width="8.00" height="10.18" viewBox="0 0 1408 1792"><path fill="#d9434c" d="M512 736C512 718 498 704 480 704H416C398 704 384 718 384 736V1312C384 1330 398 1344 416 1344H480C498 1344 512 1330 512 1312ZM768 736C768 718 754 704 736 704H672C654 704 640 718 640 736V1312C640 1330 654 1344 672 1344H736C754 1344 768 1330 768 1312ZM1024 736C1024 718 1010 704 992 704H928C910 704 896 718 896 736V1312C896 1330 910 1344 928 1344H992C1010 1344 1024 1330 1024 1312ZM1152 1460C1152 1508 1125 1536 1120 1536H288C283 1536 256 1508 256 1460V512H1152V1460ZM480 384 529 267C532 263 540 257 546 256H863C868 257 877 263 880 267L928 384ZM1408 416C1408 398 1394 384 1376 384H1067L997 217C977 168 917 128 864 128H544C491 128 431 168 411 217L341 384H32C14 384 0 398 0 416V480C0 498 14 512 32 512H128V1464C128 1574 200 1664 288 1664H1120C1208 1664 1280 1570 1280 1460V512H1376C1394 512 1408 498 1408 480Z"/></svg>
<span class="t" style="left:207.50px;top:564.00px;font-size:10.4px;line-height:10.4px;color:#d9434c;font-weight:400;letter-spacing:-0.193px;">Delete</span>
<div style="left:253.2px;top:554.6px;width:54.60000000000002px;height:26.6px;border-radius:3px;background:#fafafa;border:1px solid #666;box-sizing:border-box"></div>
<svg class="i" style="left:263.00px;top:562.88px;" width="9.50" height="10.23" viewBox="0 0 1664 1792"><path fill="#333" d="M384 1536V1280H1280V1536ZM384 896V256H1024V416C1024 469 1067 512 1120 512H1280V896ZM1536 960C1536 995 1507 1024 1472 1024C1437 1024 1408 995 1408 960C1408 925 1437 896 1472 896C1507 896 1536 925 1536 960ZM1664 960C1664 855 1577 768 1472 768H1408V512C1408 459 1378 386 1340 348L1188 196C1150 158 1077 128 1024 128H352C299 128 256 171 256 224V768H192C87 768 0 855 0 960V1376C0 1393 15 1408 32 1408H256V1568C256 1621 299 1664 352 1664H1312C1365 1664 1408 1621 1408 1568V1408H1632C1649 1408 1664 1393 1664 1376Z"/></svg>
<span class="t" style="left:277.00px;top:564.00px;font-size:10.4px;line-height:10.4px;color:#606060;font-weight:400;letter-spacing:0.029px;">Print</span>
<div style="left:315px;top:554.6px;width:62.69999999999999px;height:26.6px;border-radius:3px;background:#fafafa;border:1px solid #666;box-sizing:border-box"></div>
<svg class="i" style="left:324.50px;top:562.89px;" width="7.30" height="10.22" viewBox="0 0 1280 1792"><path fill="#333" d="M1280 1399C1280 1136 1215 832 953 832C872 911 762 960 640 960C518 960 408 911 327 832C65 832 0 1136 0 1399C0 1545 96 1664 213 1664H1067C1184 1664 1280 1545 1280 1399ZM1024 512C1024 300 852 128 640 128C428 128 256 300 256 512C256 724 428 896 640 896C852 896 1024 724 1024 512Z"/></svg>
<span class="t" style="left:336.00px;top:564.00px;font-size:10.4px;line-height:10.4px;color:#606060;font-weight:400;letter-spacing:-0.113px;">Patient</span>
<div style="left:384.2px;top:554.6px;width:79.5px;height:26.6px;border-radius:3px;background:#fafafa;border:1px solid #666;box-sizing:border-box"></div>
<svg class="i" style="left:393.80px;top:562.87px;" width="8.80" height="10.27" viewBox="0 0 1536 1792"><path fill="#333" d="M1468 380 1156 68C1119 31 1045 0 992 0H96C43 0 0 43 0 96V1696C0 1749 43 1792 96 1792H1440C1493 1792 1536 1749 1536 1696V544C1536 491 1505 417 1468 380ZM1024 136C1041 142 1058 151 1065 158L1378 471C1385 478 1394 495 1400 512H1024ZM1408 1664H128V128H896V544C896 597 939 640 992 640H1408ZM384 800V864C384 882 398 896 416 896H1120C1138 896 1152 882 1152 864V800C1152 782 1138 768 1120 768H416C398 768 384 782 384 800ZM1120 1024H416C398 1024 384 1038 384 1056V1120C384 1138 398 1152 416 1152H1120C1138 1152 1152 1138 1152 1120V1056C1152 1038 1138 1024 1120 1024ZM1120 1280H416C398 1280 384 1294 384 1312V1376C384 1394 398 1408 416 1408H1120C1138 1408 1152 1394 1152 1376V1312C1152 1294 1138 1280 1120 1280Z"/></svg>
<span class="t" style="left:407.00px;top:564.00px;font-size:10.4px;line-height:10.4px;color:#606060;font-weight:400;letter-spacing:-0.053px;">Daily Note</span>
<div style="left:693.4px;top:554.6px;width:121.60000000000002px;height:26.6px;border-radius:3px;background:#fafafa;border:1px solid #666;box-sizing:border-box"></div>
<svg class="i" style="left:702.92px;top:563.00px;" width="9.28" height="10.00" viewBox="0 0 1664 1792"><path fill="#333" d="M1619 141 909 851C903 857 899 863 896 870V160C896 125 876 116 851 141L141 851C116 876 116 916 141 941L851 1651C876 1676 896 1667 896 1632V922C899 929 903 935 909 941L1619 1651C1644 1676 1664 1667 1664 1632V160C1664 125 1644 116 1619 141Z"/></svg>
<span class="t" style="left:716.50px;top:564.00px;font-size:10.4px;line-height:10.4px;color:#606060;font-weight:400;letter-spacing:0.037px;">Return to Therapist</span>
<div style="left:822.3px;top:554.6px;width:97.0px;height:26.6px;border-radius:3px;background:#fafafa;border:1px solid #666;box-sizing:border-box"></div>
<svg class="i" style="left:831.50px;top:562.50px;" width="11.00" height="11.00" viewBox="0 0 1792 1792"><path fill="#333" d="M1764 11C1754 4 1741 0 1728 0C1717 0 1706 3 1696 9L32 969C11 981 -1 1004 0 1028C2 1053 17 1074 40 1083L435 1245L1504 320L640 1379V1728C640 1755 657 1779 682 1788C689 1791 697 1792 704 1792C723 1792 741 1784 753 1769L995 1474L1448 1659C1456 1662 1464 1664 1472 1664C1483 1664 1494 1661 1503 1656C1520 1646 1532 1630 1535 1611L1791 75C1795 50 1785 26 1764 11Z"/></svg>
<span class="t" style="left:846.00px;top:564.00px;font-size:10.4px;line-height:10.4px;color:#606060;font-weight:400;letter-spacing:-0.176px;">Send to Payer</span>
<div style="left:926.2px;top:554.6px;width:67.39999999999998px;height:26.6px;border-radius:3px;background:#fafafa;border:1px solid #666;box-sizing:border-box"></div>
<svg class="i" style="left:935.61px;top:562.56px;" width="10.89" height="10.89" viewBox="0 0 1792 1792"><path fill="#333" d="M832 1000C708 1010 564 1056 448 1110V925C563 868 710 819 832 808V1000ZM832 582C708 587 566 639 448 700V511C558 450 706 391 832 385V582ZM1664 1045C1602 1078 1482 1137 1371 1137C1337 1137 1307 1131 1280 1120V932C1267 928 1254 923 1241 917C1126 860 1002 806 851 806C845 806 839 806 832 806V584C849 582 865 581 881 581C1032 581 1126 635 1241 693C1254 699 1267 704 1280 708V932C1414 973 1573 906 1664 861V1045ZM1664 618C1573 669 1414 746 1280 708V512C1305 518 1331 520 1358 520C1472 520 1584 472 1664 429V618ZM320 256C320 185 263 128 192 128C121 128 64 185 64 256C64 303 90 344 128 366V1632C128 1650 142 1664 160 1664H224C242 1664 256 1650 256 1632V366C294 344 320 303 320 256ZM1792 320C1792 298 1780 277 1761 265C1742 254 1719 253 1699 263C1692 267 1681 273 1668 280C1606 317 1476 392 1358 392C1325 392 1295 386 1269 373C1154 317 1018 256 851 256C641 256 415 381 351 419C332 431 320 452 320 474V1216C320 1239 332 1260 352 1272C362 1277 373 1280 384 1280C395 1280 407 1277 417 1271C534 1200 737 1125 881 1125C1004 1125 1084 1165 1185 1216L1213 1230C1259 1253 1312 1265 1371 1265C1525 1265 1676 1183 1740 1149C1747 1145 1753 1142 1757 1140C1778 1129 1792 1107 1792 1083Z"/></svg>
<span class="t" style="left:950.50px;top:564.00px;font-size:10.4px;line-height:10.4px;color:#606060;font-weight:400;letter-spacing:-0.291px;">Finalize</span>
<svg class="a" style="left:0;top:0" width="157" height="70" viewBox="0 0 157 70" font-family="'Liberation Sans',sans-serif">
<g fill="#fff">
<g id="lgB"><path d="M51.6 21.2A13.2 13.2 0 1 1 62.2 38.6C57 37.6 50 35 44.3 32.3C50 32.3 58 32.6 62.7 31.6C65 31.1 66.8 30.2 67.6 29.1A5 5 0 1 0 59.3 24C56.5 24.6 53.5 23 51.6 21.2z"/>
<path d="M42.8 21.9C44.5 18 47.5 13.5 55.6 10.1C61 8 69 9 74 13.6C69 10.8 62 10 56.2 12.2C51.5 14.5 48.8 19 47.9 23.7z"/></g>
<use href="#lgB" transform="rotate(180 48.75 30.4)"/>
</g>
<text x="57.5" y="51.8" font-size="12.3" fill="#fff" stroke="#fff" stroke-width=".3" textLength="59.4" lengthAdjust="spacingAndGlyphs">MEDLEX</text>
<rect x="68.3" y="54.8" width="49.6" height="9.8" rx="2.2" fill="none" stroke="#fff" stroke-width=".8"/>
<text x="70.2" y="62.9" font-size="9" font-weight="700" fill="#fff" fill-opacity=".72" textLength="44.8" lengthAdjust="spacingAndGlyphs">SYNERGY</text>
</svg>

</div></body></html>
